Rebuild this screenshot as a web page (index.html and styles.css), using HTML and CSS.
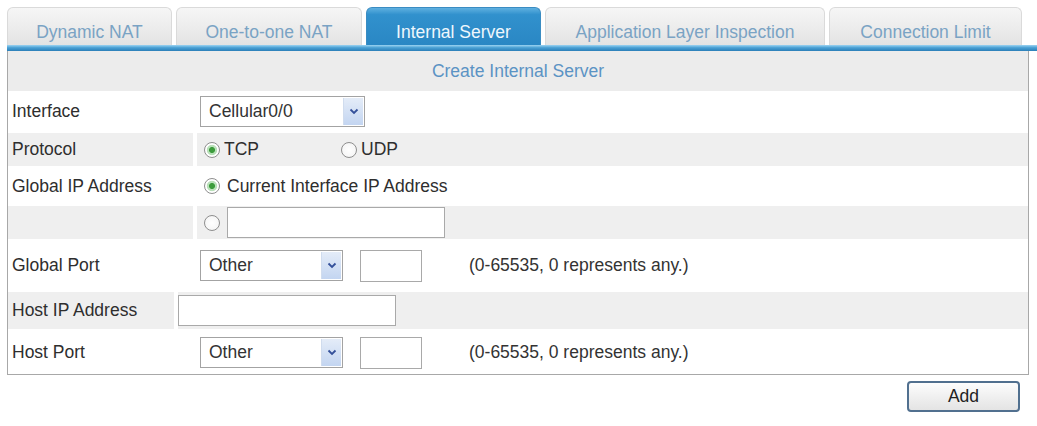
FILE: index.html
```html
<!DOCTYPE html>
<html>
<head>
<meta charset="utf-8">
<link rel="stylesheet" href="styles.css">
</head>
<body>
<div class="page">
  <div class="tabs">
    <div class="tab t1">Dynamic NAT</div>
    <div class="tab t2">One-to-one NAT</div>
    <div class="tab t3 active">Internal Server</div>
    <div class="tab t4">Application Layer Inspection</div>
    <div class="tab t5">Connection Limit</div>
  </div>
  <div class="tabline"></div>
  <div class="panel">
    <div class="head">Create Internal Server</div>

    <div class="row r-interface">
      <div class="lab">Interface</div>
      <div class="val">
        <div class="sel sel-wide"><span class="sel-text">Cellular0/0</span><span class="arrow"><svg width="10" height="7" viewBox="0 0 10 7"><polyline points="1.5,1.5 5,5 8.5,1.5" fill="none" stroke="#34509a" stroke-width="1.8"/></svg></span></div>
      </div>
    </div>

    <div class="row gray r-proto">
      <div class="lab">Protocol</div>
      <div class="val">
        <span class="radio on"></span><span class="rtext">TCP</span>
        <span class="radio udp"></span><span class="rtext">UDP</span>
      </div>
    </div>

    <div class="row r-gip">
      <div class="lab">Global IP Address</div>
      <div class="val">
        <span class="radio on"></span><span class="rtext cur">Current Interface IP Address</span>
      </div>
    </div>

    <div class="row gray r-blank">
      <div class="lab"></div>
      <div class="val">
        <span class="radio"></span><input class="inp inp-ip" type="text">
      </div>
    </div>

    <div class="row r-gport">
      <div class="lab">Global Port</div>
      <div class="val">
        <div class="sel sel-port"><span class="sel-text">Other</span><span class="arrow"><svg width="10" height="7" viewBox="0 0 10 7"><polyline points="1.5,1.5 5,5 8.5,1.5" fill="none" stroke="#34509a" stroke-width="1.8"/></svg></span></div>
        <input class="inp inp-port" type="text">
        <span class="hint">(0-65535, 0 represents any.)</span>
      </div>
    </div>

    <div class="row gray r-hip">
      <div class="lab lab-short">Host IP Address</div>
      <div class="val val-tight">
        <input class="inp inp-host" type="text">
      </div>
    </div>

    <div class="row r-hport">
      <div class="lab">Host Port</div>
      <div class="val">
        <div class="sel sel-port"><span class="sel-text">Other</span><span class="arrow"><svg width="10" height="7" viewBox="0 0 10 7"><polyline points="1.5,1.5 5,5 8.5,1.5" fill="none" stroke="#34509a" stroke-width="1.8"/></svg></span></div>
        <input class="inp inp-port" type="text">
        <span class="hint">(0-65535, 0 represents any.)</span>
      </div>
    </div>
  </div>
  <div class="actions">
    <button class="btn" type="button">Add</button>
  </div>
</div>
</body>
</html>
```

FILE: styles.css
```css
html, body {
  margin: 0;
  padding: 0;
  background: #ffffff;
}
body {
  font-family: "Liberation Sans", Arial, sans-serif;
  font-size: 17.5px;
  color: #2e2e2e;
  width: 1037px;
  height: 426px;
  overflow: hidden;
}
.page {
  padding: 7px 0 0 7px;
}
.tabs {
  display: flex;
  gap: 4px;
  height: 38px;
}
.tab {
  box-sizing: border-box;
  height: 38px;
  padding-top: 14px;
  line-height: 20px;
  text-align: center;
  color: #7aa3c4;
  background: linear-gradient(#f6f6f6, #ebebeb 60%, #e3e3e3);
  border: 1px solid #dadada;
  border-bottom: none;
  border-radius: 6px 6px 0 0;
  white-space: nowrap;
}
.t1 { width: 165px; }
.t2 { width: 186px; }
.t3 { width: 175px; }
.t4 { width: 280px; }
.t5 { width: 193px; }
.tab.active {
  background: linear-gradient(#5fb0e0, #3191cd 18%, #2a87c4);
  border-color: #3a8cc2;
  color: #eef7fd;
}
.tabline {
  height: 6px;
  background: linear-gradient(#9dd4f2, #4aa0d4 45%, #2b7fb8);
}
.panel {
  margin-right: 8px;
  border: 1px solid #a8a8a8;
  border-top: none;
  height: 323px;
}
.head {
  height: 40px;
  line-height: 40px;
  background: #ececec;
  color: #5b93c4;
  text-align: center;
}
.row {
  display: flex;
  gap: 4px;
  align-items: stretch;
}
.row.gray {
  padding: 2px 0;
  box-sizing: border-box;
}
.row.gray .lab,
.row.gray .val {
  background: #efefef;
}
.lab {
  width: 181px;
  padding-left: 4px;
  display: flex;
  align-items: center;
  flex-shrink: 0;
}
.lab-short {
  width: 162px;
}
.val {
  flex: 1;
  display: flex;
  align-items: center;
  padding-left: 3px;
}
.val-tight {
  padding-left: 0;
}
.r-interface { height: 40px; }
.r-proto { height: 37px; }
.r-gip { height: 36px; }
.r-blank { height: 37px; }
.r-gport { height: 49px; }
.r-hip { height: 41px; }
.r-hport { height: 43px; }

.sel {
  box-sizing: border-box;
  height: 31px;
  border: 1px solid #a3a3a3;
  background: #fff;
  display: flex;
  align-items: stretch;
  padding: 1px;
}
.sel-wide { width: 165px; }
.sel-port { width: 143px; }
.sel-text {
  flex: 1;
  padding-left: 7px;
  display: flex;
  align-items: center;
  color: #333;
}
.arrow {
  width: 19px;
  background: linear-gradient(#e4ecf8, #c3d5f1);
  border-left: 1px solid #d0dcee;
  display: flex;
  align-items: center;
  justify-content: center;
}
.radio {
  box-sizing: border-box;
  width: 16px;
  height: 16px;
  border-radius: 50%;
  border: 1.5px solid #8e8e8e;
  background: radial-gradient(circle, #ffffff 0, #f2f2f2 100%);
  margin-left: 4px;
  flex-shrink: 0;
}
.radio.on {
  background: radial-gradient(circle, #3c9c3c 0 2.6px, #b9e0b9 3.4px 4.8px, #ffffff 5.6px);
}
.radio.udp {
  margin-left: 82px;
}
.rtext {
  margin-left: 4px;
}
.rtext.cur {
  margin-left: 7px;
}
.inp {
  box-sizing: border-box;
  height: 31px;
  border: 1px solid #a9a9a9;
  background: #fff;
  margin: 0;
  padding: 0 4px;
  font: inherit;
  outline: none;
}
.inp-ip {
  width: 218px;
  margin-left: 7px;
}
.inp-port {
  width: 62px;
  height: 32px;
  margin-left: 17px;
}
.inp-host {
  width: 218px;
}
.hint {
  margin-left: 47px;
  color: #333;
}
.actions {
  display: flex;
  justify-content: flex-end;
  padding: 6px 17px 0 0;
}
.btn {
  box-sizing: border-box;
  width: 113px;
  height: 31px;
  border: 2px solid #51708f;
  border-radius: 4px;
  background: linear-gradient(#fdfdfd, #f0f0f0 50%, #e4e4e4);
  font-family: "Liberation Sans", Arial, sans-serif;
  font-size: 17.5px;
  color: #222;
  padding: 0;
}
```
